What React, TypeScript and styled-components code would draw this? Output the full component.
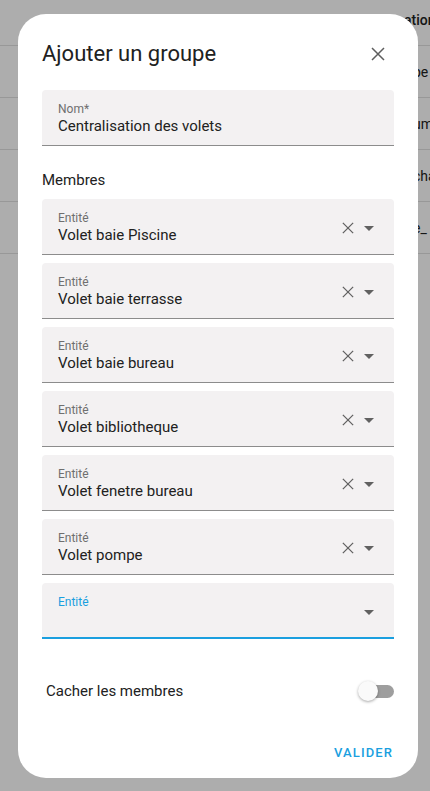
import styled, { createGlobalStyle } from 'styled-components';

const GlobalStyle = createGlobalStyle`
  html, body {
    margin: 0;
    padding: 0;
    background: #ffffff;
    font-family: Roboto, "Noto Sans", sans-serif;
    -webkit-font-smoothing: antialiased;
  }
`;

// Page behind the dialog
const Page = styled.div`
  width: 430px;
  height: 791px;
  overflow: hidden;
  background: #ffffff;
`;

const BgRow = styled.div<{ $header?: boolean }>`
  height: 52px;
  box-sizing: border-box;
  border-bottom: 1px solid #e0e0e0;
  display: flex;
  align-items: center;
  padding-left: ${(p) => (p.$header ? '404px' : '413px')};
  margin-top: ${(p) => (p.$header ? '-6px' : '0')};
  font-size: 14px;
  color: #212121;
  font-weight: ${(p) => (p.$header ? 500 : 400)};
  white-space: nowrap;
`;

const Scrim = styled.div`
  position: fixed;
  inset: 0;
  background: rgba(0, 0, 0, 0.32);
`;

const Dialog = styled.div`
  position: fixed;
  left: 18px;
  top: 14px;
  width: 400px;
  height: 764px;
  box-sizing: border-box;
  background: #ffffff;
  border-radius: 28px;
  padding: 24px 24px 0;
  display: flex;
  flex-direction: column;
`;

const Header = styled.div`
  display: flex;
  align-items: center;
  justify-content: space-between;
  height: 32px;
`;

const Title = styled.h2`
  margin: 0;
  font-size: 22px;
  font-weight: 400;
  color: #212121;
  line-height: 32px;
`;

const IconButton = styled.button`
  border: 0;
  background: none;
  padding: 0;
  width: 24px;
  height: 24px;
  margin-right: 4px;
  display: flex;
  align-items: center;
  justify-content: center;
  color: #5e5e5e;
`;

const NameWrap = styled.div`
  margin-top: 20px;
`;

const FieldBox = styled.div<{ $focused?: boolean }>`
  height: 56px;
  box-sizing: border-box;
  background: #f3f1f2;
  border-radius: 4px 4px 0 0;
  border-bottom: ${(p) => (p.$focused ? '2px solid #1a9fdf' : '1px solid #8c8c8c')};
  padding: 12px 16px 0;
  display: flex;
  align-items: flex-start;
`;

const FieldText = styled.div`
  flex: 1;
  display: flex;
  flex-direction: column;
`;

const FieldLabel = styled.span<{ $focused?: boolean }>`
  font-size: 12px;
  line-height: 14px;
  color: ${(p) => (p.$focused ? '#1a9fdf' : '#6f6f6f')};
`;

const FieldValue = styled.span`
  font-size: 15px;
  line-height: 20px;
  color: #212121;
`;

const FieldIcons = styled.div`
  display: flex;
  align-items: center;
  gap: 8px;
  height: 34px;
  margin-right: 2px;
`;

const IconSlot = styled.span<{ $w?: number }>`
  display: flex;
  justify-content: center;
  width: ${(p) => (p.$w ? `${p.$w}px` : 'auto')};
  color: #616161;
`;

const SectionLabel = styled.div`
  font-size: 15px;
  color: #212121;
  line-height: 20px;
  margin: 24px 0 9px;
`;

const Members = styled.div`
  display: flex;
  flex-direction: column;
  gap: 8px;
`;

const ToggleRow = styled.div`
  display: flex;
  align-items: center;
  justify-content: space-between;
  padding-left: 4px;
  margin-top: 40px;
  height: 24px;
`;

const ToggleLabel = styled.span`
  font-size: 15px;
  color: #212121;
`;

const Switch = styled.div`
  position: relative;
  width: 36px;
  height: 14px;
  display: flex;
  align-items: center;
  justify-content: flex-end;
`;

const Track = styled.div`
  width: 30px;
  height: 13px;
  border-radius: 7px;
  background: #9e9e9e;
`;

const Thumb = styled.div`
  position: absolute;
  left: 0;
  top: 50%;
  width: 20px;
  height: 20px;
  margin-top: -10px;
  border-radius: 50%;
  background: #fafafa;
  box-shadow: 0 1px 3px rgba(0, 0, 0, 0.35);
`;

const Actions = styled.div`
  display: flex;
  justify-content: flex-end;
  margin-top: 40px;
`;

const TextButton = styled.button`
  border: 0;
  background: none;
  padding: 0;
  font-family: Roboto, sans-serif;
  font-size: 13px;
  font-weight: 500;
  letter-spacing: 1.1px;
  color: #1a9fdf;
  line-height: 20px;
  margin-right: 1px;
`;

function CloseIcon({ size }: { size: number }) {
  return (
    <svg width={size} height={size} viewBox="0 0 14 14" fill="none" stroke="currentColor" strokeWidth="1.5">
      <path d="M1 1L13 13M13 1L1 13" />
    </svg>
  );
}

function ArrowDown() {
  return (
    <svg width="10" height="5" viewBox="0 0 10 5">
      <path d="M0 0L10 0L5 5Z" fill="#616161" />
    </svg>
  );
}

interface FieldProps {
  label: string;
  value?: string;
  focused?: boolean;
  select?: boolean;
}

function Field({ label, value, focused, select }: FieldProps) {
  return (
    <FieldBox $focused={focused}>
      <FieldText>
        <FieldLabel $focused={focused}>{label}</FieldLabel>
        {value && <FieldValue>{value}</FieldValue>}
      </FieldText>
      {select && (
        <FieldIcons>
          {value && (
            <IconSlot>
              <CloseIcon size={12} />
            </IconSlot>
          )}
          <IconSlot $w={14}>
            <ArrowDown />
          </IconSlot>
        </FieldIcons>
      )}
    </FieldBox>
  );
}

const members = [
  'Volet baie Piscine',
  'Volet baie terrasse',
  'Volet baie bureau',
  'Volet bibliotheque',
  'Volet fenetre bureau',
  'Volet pompe',
];

const bgRows = ['ation', 'pe', 'um', 'cha', 'e_'];

export default function App() {
  return (
    <>
      <GlobalStyle />
      <Page>
        {bgRows.map((t, i) => (
          <BgRow key={t} $header={i === 0}>
            {t}
          </BgRow>
        ))}
      </Page>
      <Scrim />
      <Dialog>
        <Header>
          <Title>Ajouter un groupe</Title>
          <IconButton>
            <CloseIcon size={14} />
          </IconButton>
        </Header>
        <NameWrap>
          <Field label="Nom*" value="Centralisation des volets" />
        </NameWrap>
        <SectionLabel>Membres</SectionLabel>
        <Members>
          {members.map((m) => (
            <Field key={m} label="Entité" value={m} select />
          ))}
          <Field label="Entité" focused select />
        </Members>
        <ToggleRow>
          <ToggleLabel>Cacher les membres</ToggleLabel>
          <Switch>
            <Track />
            <Thumb />
          </Switch>
        </ToggleRow>
        <Actions>
          <TextButton>VALIDER</TextButton>
        </Actions>
      </Dialog>
    </>
  );
}
